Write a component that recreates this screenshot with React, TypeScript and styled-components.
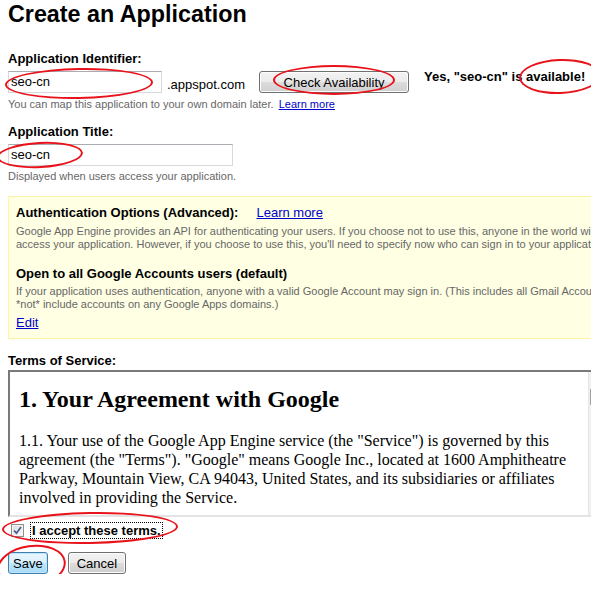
import React from 'react';
import styled, { createGlobalStyle } from 'styled-components';

const GlobalStyle = createGlobalStyle`
  html, body {
    margin: 0;
    padding: 0;
    background: #fff;
    overflow: hidden;
  }
  body {
    font-family: "Liberation Sans", Arial, sans-serif;
    color: #000;
  }
`;

const Page = styled.div`
  position: relative;
  width: 680px;
  padding: 0 8px;
  box-sizing: border-box;
`;

const Title = styled.h1`
  margin: 0;
  font-size: 23.3px;
  line-height: 28px;
  font-weight: bold;
`;

const Label = styled.div<{ $top: number }>`
  margin-top: ${(p) => p.$top}px;
  font-size: 13px;
  line-height: 16px;
  font-weight: bold;
`;

const FieldRow = styled.div`
  display: flex;
  align-items: center;
  height: 22px;
  margin-top: 4px;
`;

const TextBox = styled.div<{ $w: number }>`
  width: ${(p) => p.$w}px;
  height: 22px;
  box-sizing: border-box;
  border: 1px solid #d6d9dd;
  border-top-color: #a9acb2;
  padding: 0 2px;
  font-size: 13px;
  line-height: 20px;
`;

const Suffix = styled.span`
  align-self: flex-end;
  margin-left: 5px;
  font-size: 13px;
  line-height: 16px;
`;

const Button = styled.button<{ $primary?: boolean; $w?: number }>`
  height: 22px;
  box-sizing: border-box;
  ${(p) => (p.$w ? `width: ${p.$w}px;` : '')}
  padding: 0 ${(p) => (p.$primary ? 4 : 8)}px;
  font-family: "Liberation Sans", Arial, sans-serif;
  font-size: 13px;
  color: #000;
  border-radius: 3px;
  border: 1px solid ${(p) => (p.$primary ? '#3c7fb1' : '#707070')};
  background: ${(p) =>
    p.$primary
      ? 'linear-gradient(#eaf6fd 0%, #d9f0fc 50%, #bee6fd 51%, #a7d9f5 100%)'
      : 'linear-gradient(#f2f2f2 0%, #ebebeb 50%, #dddddd 51%, #cfcfcf 100%)'};
  box-shadow: inset 0 0 0 1px ${(p) => (p.$primary ? '#c0e6fb' : '#fcfcfc')};
`;

const CheckButton = styled(Button)`
  margin-left: 14px;
`;

const Verdict = styled.span`
  align-self: flex-start;
  margin-top: -2px;
  margin-left: 15px;
  font-size: 13px;
  line-height: 16px;
  font-weight: bold;
  white-space: nowrap;
`;

const Hint = styled.div<{ $top: number }>`
  margin-top: ${(p) => p.$top}px;
  font-size: 11px;
  line-height: 14px;
  color: #676767;
`;

const Link = styled.a<{ $size?: number }>`
  color: #0000cc;
  text-decoration: underline;
  font-size: ${(p) => p.$size ?? 13}px;
  cursor: pointer;
`;

const HintLink = styled(Link)`
  margin-left: 2px;
`;

const OptionsBox = styled.div`
  margin-top: 13px;
  width: 668px;
  box-sizing: border-box;
  padding: 8px 7px 7px;
  background: #ffffe4;
  border: 1px solid #fff3a6;
`;

const OptionsHead = styled.div<{ $top?: number }>`
  display: flex;
  gap: 18px;
  margin-top: ${(p) => p.$top ?? 0}px;
  font-size: 13px;
  line-height: 16px;
`;

const OptionsTitle = styled.span`
  font-weight: bold;
`;

const OptionsText = styled.p<{ $top: number }>`
  margin: ${(p) => p.$top}px 0 0;
  font-size: 11px;
  line-height: 13px;
  color: #676767;
`;

const EditLine = styled.div`
  margin-top: 4px;
  font-size: 13px;
  line-height: 16px;
`;

const TermsFrame = styled.div`
  display: flex;
  margin-top: 1px;
  width: 600px;
  height: 147px;
  box-sizing: border-box;
  border: 2px solid;
  border-color: #7a7a7a #e3e3e3 #e3e3e3 #7a7a7a;
  overflow: hidden;
  background: #fff;
`;

const TermsBody = styled.div`
  flex: 1;
  padding: 0 8px 0 9px;
  font-family: "Liberation Serif", "Times New Roman", serif;
  color: #000;
`;

const TermsHeading = styled.h2`
  margin: 13px 0 0;
  font-size: 24px;
  line-height: 28px;
  font-weight: bold;
`;

const TermsPara = styled.p`
  margin: 18px 0 0;
  font-size: 16px;
  line-height: 19px;
`;

const ScrollBar = styled.div`
  width: 17px;
  background: #f0f0f0;
  border-left: 1px solid #e6e6e6;
  display: flex;
  justify-content: center;
  padding-top: 16px;
`;

const ScrollThumb = styled.div`
  width: 13px;
  height: 16px;
  border: 1px solid #a0a0a0;
  border-radius: 2px;
  background: #eaeaea;
`;

const AcceptRow = styled.label`
  display: flex;
  align-items: center;
  margin-top: 5px;
  height: 16px;
`;

const CheckBox = styled.span`
  display: flex;
  align-items: center;
  justify-content: center;
  width: 13px;
  height: 13px;
  box-sizing: border-box;
  margin-left: 3px;
  border: 1px solid #8e8f8f;
  background: linear-gradient(135deg, #dcdcdc, #fbfbfb);
  box-shadow: inset 0 0 0 1px #f4f4f4;
`;

const AcceptText = styled.span`
  margin-left: 7px;
  padding: 0 1px;
  font-size: 13px;
  line-height: 15px;
  font-weight: bold;
  outline: 1px dotted #000;
`;

const Actions = styled.div`
  display: flex;
  gap: 20px;
  margin-top: 14px;
`;

const Mark = styled.div<{ $x: number; $y: number; $w: number; $h: number; $r?: number }>`
  position: absolute;
  left: ${(p) => p.$x}px;
  top: ${(p) => p.$y}px;
  width: ${(p) => p.$w}px;
  height: ${(p) => p.$h}px;
  box-sizing: border-box;
  border: 2.5px solid #e8121a;
  border-radius: 50%;
  transform: rotate(${(p) => p.$r ?? 0}deg);
  pointer-events: none;
`;

const marks = [
  { x: 5, y: 68, w: 148, h: 31, r: -1 },
  { x: 273, y: 65, w: 122, h: 30, r: 0 },
  { x: 519, y: 59, w: 82, h: 35, r: -2 },
  { x: -3, y: 142, w: 86, h: 26, r: -3 },
  { x: 2, y: 512, w: 176, h: 32, r: -1 },
  { x: -3, y: 545, w: 69, h: 42, r: -8 },
];

export default function App() {
  return (
    <Page>
      <GlobalStyle />
      <Title>Create an Application</Title>

      <Label $top={23}>Application Identifier:</Label>
      <FieldRow>
        <TextBox $w={154}>seo-cn</TextBox>
        <Suffix>.appspot.com</Suffix>
        <CheckButton $w={150}>Check Availability</CheckButton>
        <Verdict>Yes, "seo-cn" is available!</Verdict>
      </FieldRow>
      <Hint $top={4}>
        You can map this application to your own domain later.{' '}
        <HintLink $size={11}>Learn more</HintLink>
      </Hint>

      <Label $top={13}>Application Title:</Label>
      <FieldRow>
        <TextBox $w={225}>seo-cn</TextBox>
      </FieldRow>
      <Hint $top={3}>Displayed when users access your application.</Hint>

      <OptionsBox>
        <OptionsHead>
          <OptionsTitle>Authentication Options (Advanced):</OptionsTitle>
          <Link>Learn more</Link>
        </OptionsHead>
        <OptionsText $top={4}>
          Google App Engine provides an API for authenticating your users. If you choose not to use this,
          anyone in the world will be able to access your application. However, if you choose to use this,
          you'll need to specify now who can sign in to your application.
        </OptionsText>
        <OptionsHead $top={15}>
          <OptionsTitle>Open to all Google Accounts users (default)</OptionsTitle>
        </OptionsHead>
        <OptionsText $top={3}>
          If your application uses authentication, anyone with a valid Google Account may sign in. (This
          includes all Gmail Accounts, but does *not* include accounts on any Google Apps domains.)
        </OptionsText>
        <EditLine>
          <Link>Edit</Link>
        </EditLine>
      </OptionsBox>

      <Label $top={14}>Terms of Service:</Label>
      <TermsFrame>
        <TermsBody>
          <TermsHeading>1. Your Agreement with Google</TermsHeading>
          <TermsPara>
            1.1. Your use of the Google App Engine service (the "Service") is governed by this agreement (the
            "Terms"). "Google" means Google Inc., located at 1600 Amphitheatre Parkway, Mountain View, CA
            94043, United States, and its subsidiaries or affiliates involved in providing the Service.
          </TermsPara>
        </TermsBody>
        <ScrollBar>
          <ScrollThumb />
        </ScrollBar>
      </TermsFrame>

      <AcceptRow>
        <CheckBox>
          <svg width="9" height="9" viewBox="0 0 9 9">
            <path d="M1 4.5 L3.5 7.2 L8 1" fill="none" stroke="#4a5f8f" strokeWidth="1.8" />
          </svg>
        </CheckBox>
        <AcceptText>I accept these terms.</AcceptText>
      </AcceptRow>

      <Actions>
        <Button $primary>Save</Button>
        <Button>Cancel</Button>
      </Actions>

      {marks.map((m, i) => (
        <Mark key={i} $x={m.x} $y={m.y} $w={m.w} $h={m.h} $r={m.r} />
      ))}
    </Page>
  );
}
